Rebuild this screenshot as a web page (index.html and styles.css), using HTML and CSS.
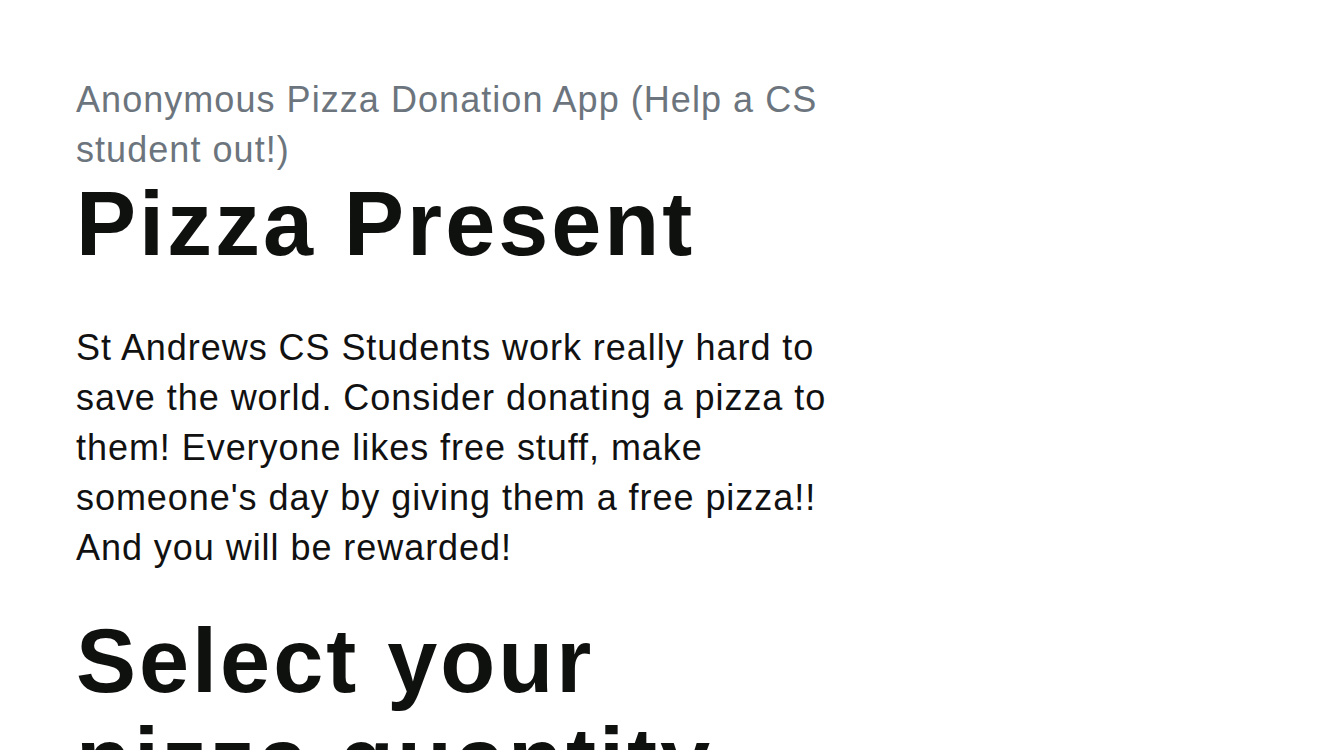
FILE: index.html
```html
<!DOCTYPE html>
<html lang="en">
<head>
<meta charset="utf-8">
<title>Pizza Present</title>
<link rel="stylesheet" href="styles.css">
</head>
<body>
<main class="page">
  <section class="intro">
    <p class="tagline">Anonymous Pizza Donation App (Help a CS student out!)</p>
    <h1 class="title">Pizza Present</h1>
    <p class="lead">St Andrews CS Students work really hard to save the world. Consider donating a pizza to them! Everyone likes free stuff, make someone's day by giving them a free pizza!! And you will be rewarded!</p>
    <h2 class="title section-title">Select your pizza quantity</h2>
  </section>
</main>
</body>
</html>
```
FILE: styles.css
```css
html, body {
  margin: 0;
  padding: 0;
  background: #ffffff;
}
body {
  font-family: "Liberation Sans", Arial, sans-serif;
  color: #111111;
}
.page {
  padding: 75px 0 0 76px;
}
.intro {
  width: 770px;
}
.tagline {
  margin: 0;
  font-size: 36px;
  line-height: 50px;
  letter-spacing: 1.05px;
  color: #6c757d;
}
.title {
  margin: 0;
  font-size: 90px;
  line-height: 99px;
  font-weight: 700;
  letter-spacing: 3px;
  color: #0f110f;
}
.lead {
  margin: 49px 0 0;
  font-size: 36px;
  line-height: 50px;
  letter-spacing: 0.95px;
}
.section-title {
  margin-top: 39px;
}
```
